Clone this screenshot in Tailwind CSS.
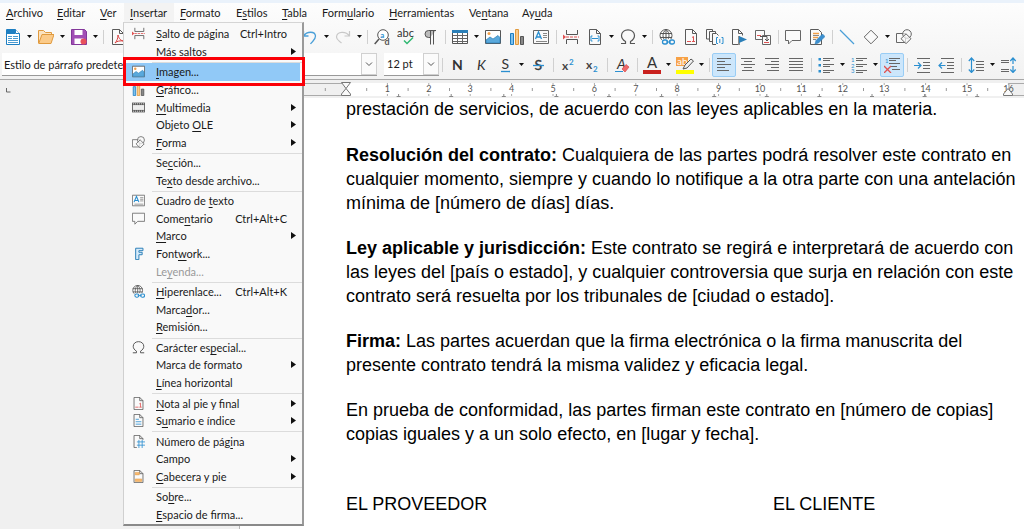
<!DOCTYPE html>
<html lang="es">
<head>
<meta charset="utf-8">
<meta name="viewport" content="width=device-width, initial-scale=1">
<title>Contrato - Writer</title>
<script src="https://cdn.jsdelivr.net/npm/@tailwindcss/browser@4"></script>
</head>
<body class="h-screen overflow-hidden bg-white font-[Lato,sans-serif] text-[11px] text-[#1a1a1a]">

<svg class="hidden" aria-hidden="true">
  <defs>
    <g id="page"><path d="M2.5.5h7l4 4v11h-11z" fill="#fafafa" stroke="#5a5a5a"/><path d="M9.5.5v4h4" fill="none" stroke="#5a5a5a"/></g>
  </defs>
  <symbol id="new" viewBox="0 0 16 16"><path d="M1.500.5h9l4 4v11h-13z" fill="#fff" stroke="#1e7fc2"/><path d="M1 1h9v4H1z" fill="#1e7fc2"/><path d="M10.500.5v4h4" fill="#fff" stroke="#1e7fc2"/><path d="M3 7.500h4M3 9.500h4M3 11.500h10M3 13.500h10M8 7.500h5M8 9.500h5" stroke="#4a9bd1"/></symbol>
  <symbol id="open" viewBox="0 0 16 16"><path d="M.5 14V1.500h5l2 2h6v2" fill="#fbe3c0" stroke="#e09a3e"/><path d="M.7 14.500l3.300-9h12l-3 9z" fill="#fbcb8a" stroke="#e09a3e"/></symbol>
  <symbol id="save" viewBox="0 0 16 16"><path d="M.5.5h13l2 2v13H.5z" fill="#a14fb5" stroke="#83379a"/><path d="M3.500 1h8v5h-8zM3.500 9.500h9V15h-9z" fill="#fff"/><circle cx="12.500" cy="12.500" r="3" fill="#e8505b"/></symbol>
  <symbol id="pdf" viewBox="0 0 16 16"><use href="#page"/><path d="M5 14c2-2 3-5 3-8 1 4 3 6 6 6-4-.5-7 0-9 2z" fill="none" stroke="#d8403f"/></symbol>
  <symbol id="undo" viewBox="0 0 16 16"><path d="M1.500 2v5h5M1.500 7C5 2 13 2 13.500 7c0 4-3 5-5 8" fill="none" stroke="#4a9fd8" stroke-width="1.300"/></symbol>
  <symbol id="redo" viewBox="0 0 16 16"><path d="M14.500 2v5h-5M14.500 7C11 2 2 2 1.500 8c0 3 3 4 5 6" fill="none" stroke="#c8c8c8" stroke-width="1.200"/></symbol>
  <symbol id="find" viewBox="0 0 16 16"><circle cx="9" cy="6" r="5.300" fill="#fff" stroke="#555"/><path d="M5 10L.7 15" stroke="#555" stroke-width="1.500"/><text x="6.200" y="8.500" font-size="8" font-weight="bold" fill="#2b8fd0">a</text><text x="10.500" y="15.500" font-size="9" font-weight="bold" fill="#555">d</text></symbol>
  <symbol id="abc" viewBox="0 0 18 16"><text x="0" y="8" font-size="11" fill="#333">abc</text><path d="M7 11.500l3 3 6-6" fill="none" stroke="#2fb872" stroke-width="1.500"/></symbol>
  <symbol id="pilcrow" viewBox="0 0 16 16"><path d="M14 1.500H6.500a3.500 3.500 0 0 0 0 7H8z" fill="#bbb"/><path d="M14 1.500H6.500a3.500 3.500 0 0 0 0 7H8.500M8.500 2v13.500M11.500 2v13.500" fill="none" stroke="#555"/></symbol>
  <symbol id="table" viewBox="0 0 16 16"><path d="M.5 1.500h15v13H.5z" fill="#fff" stroke="#555"/><path d="M0 1h16v3H0z" fill="#2b7fb8"/><path d="M1 6.500h14M1 9.500h14M1 12.500h14M5.500 4v10M10.500 4v10" stroke="#666"/></symbol>
  <symbol id="image" viewBox="0 0 16 16"><path d="M.5 1.500h15v13H.5z" fill="#fff" stroke="#555"/><path d="M1 14v-3l4-3 3 2 5-3.500 2 2V14z" fill="#5aa9dc" stroke="#2b7fb8" stroke-width=".7"/><circle cx="4" cy="4.500" r="1.500" fill="#f2a04a"/></symbol>
  <symbol id="chart" viewBox="0 0 16 16"><path d="M1.500 4.500h3v11h-3z" fill="#7cc0ee" stroke="#1e7fc2"/><path d="M6.500.5h3v15h-3z" fill="#fbcb8a" stroke="#e09a3e"/><path d="M11.500 7.500h3v8h-3z" fill="#888" stroke="#555"/></symbol>
  <symbol id="textbox" viewBox="0 0 16 16"><path d="M.5 1.500h15v13H.5z" fill="#fafafa" stroke="#666"/><path d="M2.500 10L5.500 3l3 7M3.500 8h4" fill="none" stroke="#2b8fd0" stroke-width="1.300"/><path d="M10 4.500h4M10 6.500h4M10 8.500h4M3 12.500h11" stroke="#888"/></symbol>
  <symbol id="break" viewBox="0 0 16 16"><path d="M3.500 1v4.500h11V1M3.500 15v-4.500h11V15" fill="none" stroke="#555"/><path d="M3 8h13" stroke="#e05252" stroke-dasharray="3 1"/><path d="M0 5.500L3 8l-3 2.500z" fill="#e05252"/></symbol>
  <symbol id="field" viewBox="0 0 16 16"><use href="#page"/><path d="M5.500 7H4v5h1.500M10.500 7H12v5h-1.500M5 9.500h6" fill="none" stroke="#2b8fd0"/></symbol>
  <symbol id="omega" viewBox="0 0 16 16"><path d="M1 14.500h4.500v-2C3 11 1.500 9 1.500 6.500 1.500 3 4.500.800 8 .8s6.500 2.200 6.500 5.700c0 2.500-1.500 4.500-4 6v2H15" fill="none" stroke="#555" stroke-width="1.200"/></symbol>
  <symbol id="link" viewBox="0 0 16 16"><circle cx="7" cy="6.500" r="6" fill="#fff" stroke="#555"/><path d="M1 4.500h12M1 8.500h12M7 .5v12M7 .5c-4 3-4 9 0 12M7 .5c4 3 4 9 0 12" fill="none" stroke="#555"/><path d="M3 10h13v6H3z" fill="#f7f7f7"/><rect x="3.500" y="11" width="5" height="4" rx="2" fill="none" stroke="#2b8fd0" stroke-width="1.300"/><rect x="10.500" y="11" width="5" height="4" rx="2" fill="none" stroke="#2b8fd0" stroke-width="1.300"/><path d="M7 13h5" stroke="#2b8fd0"/></symbol>
  <symbol id="footnote" viewBox="0 0 16 16"><use href="#page"/><path d="M4 12.500h4" stroke="#e05252"/><path d="M9 8.500l1.500-1v5M9 12.500h3" fill="none" stroke="#e05252"/></symbol>
  <symbol id="pages" viewBox="0 0 18 16"><path d="M4.500 10h-4V.5h6V2" fill="#fafafa" stroke="#5a5a5a"/><path d="M8 12.500H3.500v-10h6V4" fill="#fafafa" stroke="#5a5a5a"/><path d="M10 15.500H6.500V4.500h4l2 2" fill="#fafafa" stroke="#5a5a5a"/><path d="M12 8.500h-1.500v6H12M15.500 8.500H17v6h-1.500M13.800 10v4" fill="none" stroke="#2b8fd0"/></symbol>
  <symbol id="bookmark" viewBox="0 0 16 16"><path d="M7 15.500H1.500V.5h6l4 4v2M7.500.5v4h4" fill="#fafafa" stroke="#5a5a5a"/><path d="M8 7v9" stroke="#222"/><path d="M8 7l8 3.500-8 3.500z" fill="#2b7fb8"/></symbol>
  <symbol id="cross" viewBox="0 0 16 16"><path d="M.5 1.500h9v9h-9z" fill="#fafafa" stroke="#666"/><path d="M7.500 6.500h8v9h-8z" fill="#fafafa" stroke="#666"/><path d="M2 6.500h4" stroke="#e05252"/><path d="M9 13.500h5" stroke="#e05252"/><path d="M5 7.500h7v4M10 10l2 2 2-2" fill="none" stroke="#555"/></symbol>
  <symbol id="comment" viewBox="0 0 16 16"><path d="M.5 1.500h15v10H7l-3.500 3.500v-3.500h-3z" fill="#fafafa" stroke="#666"/></symbol>
  <symbol id="track" viewBox="0 0 16 16"><path d="M1.500.5h8l3 3v12h-11z" fill="#fafafa" stroke="#5a5a5a"/><path d="M4 4.500h6M4 8.500h5" stroke="#f2a04a" stroke-width="1.500"/><path d="M4 6.500h6M4 10.500h3" stroke="#888"/><path d="M6 15l1-3.500L13.500 5 16 7.500 9.500 14z" fill="#3c8fd0" stroke="#2b7fb8" stroke-width=".6"/></symbol>
  <symbol id="line" viewBox="0 0 16 16"><path d="M1 1l14 14" stroke="#4a9fd8" stroke-width="1.200"/></symbol>
  <symbol id="diamond" viewBox="0 0 16 16"><path d="M8 1.200L14.800 8 8 14.800 1.200 8z" fill="#fafafa" stroke="#666"/></symbol>
  <symbol id="shapes" viewBox="0 0 16 16"><path d="M.5 4.500h9v9h-9z" fill="#fafafa" stroke="#666"/><circle cx="11" cy="5" r="4.300" fill="#fafafa" fill-opacity=".7" stroke="#666"/><path d="M10 4.800L15 9.700l-5 5-5-5z" fill="#fafafa" fill-opacity=".7" stroke="#666"/></symbol>
  <symbol id="bold" viewBox="0 0 16 16"><text x="3" y="13" font-size="14" font-weight="bold" fill="#333">N</text></symbol>
  <symbol id="italic" viewBox="0 0 16 16"><text x="4" y="13" font-size="14" font-style="italic" fill="#333">K</text></symbol>
  <symbol id="under" viewBox="0 0 16 16"><text x="4.500" y="12" font-size="14" fill="#333">S</text><path d="M4 14.500h9" stroke="#2b8fd0" stroke-width="1.300"/></symbol>
  <symbol id="strike" viewBox="0 0 16 16"><text x="4.500" y="13" font-size="14" fill="#333" stroke="#444" stroke-width=".4">S</text><path d="M3 8.500h11" stroke="#2b8fd0" stroke-width="1.300"/></symbol>
  <symbol id="sup" viewBox="0 0 16 16"><text x="2" y="12.500" font-size="12" font-weight="bold" fill="#444">x</text><text x="9" y="7.500" font-size="8" font-weight="bold" fill="#2b8fd0">2</text></symbol>
  <symbol id="sub" viewBox="0 0 16 16"><text x="2" y="11.500" font-size="12" font-weight="bold" fill="#444">x</text><text x="9" y="15" font-size="8" font-weight="bold" fill="#2b8fd0">2</text></symbol>
  <symbol id="clear" viewBox="0 0 16 16"><text x="3" y="12" font-size="14" font-style="italic" fill="#333">A</text><path d="M1 14.500h8" stroke="#2b8fd0"/><path d="M8 12l4-4.500 3 2.500-4 5z" fill="#ee6a6a" stroke="#d84848" stroke-width=".7"/></symbol>
  <symbol id="fcolor" viewBox="0 0 18 18"><text x="4" y="12" font-size="15" fill="#333">A</text><path d="M0 14h18v4H0z" fill="#c9211e"/></symbol>
  <symbol id="hilite" viewBox="0 0 18 18"><path d="M0 1h12v9H0z" fill="#f7a145"/><text x="1" y="9" font-size="10" fill="#fff">ab</text><path d="M7 13l2-4 6-6 2.500 2-6.500 7z" fill="#eee" stroke="#555"/><path d="M0 14h18v4H0z" fill="#ff0"/></symbol>
  <symbol id="left" viewBox="0 0 16 16"><path d="M1 1.500h14M1 4.500h8M1 7.500h14M1 10.500h8M1 13.500h12" stroke="#666"/></symbol>
  <symbol id="center" viewBox="0 0 16 16"><path d="M1 1.500h14M4 4.500h8M1 7.500h14M4 10.500h8M2 13.500h12" stroke="#666"/></symbol>
  <symbol id="right" viewBox="0 0 16 16"><path d="M1 1.500h14M7 4.500h8M1 7.500h14M7 10.500h8M3 13.500h12" stroke="#666"/></symbol>
  <symbol id="just" viewBox="0 0 16 16"><path d="M1 1.500h14M1 4.500h14M1 7.500h14M1 10.500h14M1 13.500h14" stroke="#666"/></symbol>
  <symbol id="bullets" viewBox="0 0 16 16"><path d="M5 1.500h11M5 3.500h7M5 7.500h11M5 9.500h7M5 13.500h11M5 15.500h7" stroke="#666"/><path d="M.5 1h2.500v2.500H.5zM.5 7h2.500v2.500H.5zM.5 13h2.500v2.500H.5z" fill="#2b8fd0"/></symbol>
  <symbol id="numbers" viewBox="0 0 16 16"><path d="M5 1.500h11M5 3.500h7M5 7.500h11M5 9.500h7M5 13.500h11M5 15.500h7" stroke="#666"/><g font-size="6" fill="#2b8fd0"><text x="0" y="5">1</text><text x="0" y="10.500">2</text><text x="0" y="16">3</text></g></symbol>
  <symbol id="nolist" viewBox="0 0 16 16"><path d="M5 1.500h11M5 3.500h7M5 6.500h11M7 9.500h6M8 12.500h8" stroke="#666"/><text x="1" y="5.500" font-size="6" fill="#2b8fd0">1</text><path d="M0 9l7 7M7 9l-7 7" stroke="#e05252" stroke-width="1.300"/></symbol>
  <symbol id="indent" viewBox="0 0 16 16"><path d="M3 1.500h13M9 5.500h7M9 8.500h7M9 11.500h7M3 15.500h13" stroke="#666"/><path d="M0 8.500h7M4 5.500l3 3-3 3" fill="none" stroke="#2b8fd0" stroke-width="1.200"/></symbol>
  <symbol id="outdent" viewBox="0 0 16 16"><path d="M3 1.500h13M9 5.500h7M9 8.500h7M9 11.500h7M3 15.500h13" stroke="#666"/><path d="M7.500 8.500H.8M4 5.500l-3 3 3 3" fill="none" stroke="#2b8fd0" stroke-width="1.200"/></symbol>
  <symbol id="spacing" viewBox="0 0 16 16"><path d="M8 4.500h8M8 7.500h8M8 10.500h8M8 13.500h8" stroke="#666"/><path d="M3.500 1v14M.8 4l2.700-3 2.700 3M.8 12.500l2.700 3 2.700-3" fill="none" stroke="#2b8fd0" stroke-width="1.200"/></symbol>
  <symbol id="paraspace" viewBox="0 0 16 16"><path d="M0 3.500h8M0 5.500h8M0 12.500h8M0 14.500h8" stroke="#666"/><path d="M12 1v6M9.300 4L12 1l2.700 3M12 9v6M9.300 12.500l2.700 3 2.700-3" fill="none" stroke="#2b8fd0" stroke-width="1.200"/></symbol>
  <symbol id="film" viewBox="0 0 16 16"><path d="M0 2h16v12H0z" fill="#555"/><path d="M1 5h14v6H1z" fill="#eee"/><path d="M1 3.500h14M1 12.500h14" stroke="#fff" stroke-dasharray="1.500 1"/></symbol>
  <symbol id="fontwork" viewBox="0 0 16 16"><path d="M4.500 1.500h9v3h-5v2h4v3h-4v6h-4z" fill="#d6ebfa" stroke="#2b7fb8" stroke-width="1.200"/></symbol>
  <symbol id="index" viewBox="0 0 16 16"><use href="#page"/><path d="M4.500 6.500h4M4.500 9.500h7M4.500 12.500h7" stroke="#2b8fd0"/></symbol>
  <symbol id="pagenum" viewBox="0 0 16 16"><use href="#page"/><path d="M6 6h10v10H6z" fill="#f8f8f8"/><path d="M8.500 6v10M12.500 6v10M6 8.500h10M6 12.500h10" stroke="#2b8fd0"/></symbol>
  <symbol id="header" viewBox="0 0 16 16"><use href="#page"/><path d="M4 3h5v3H4zM4 11h8v3H4z" fill="#f9b870" stroke="#e09a3e" stroke-width=".6"/></symbol>
</svg>

<div class="flex h-full flex-col">
  <header class="shrink-0 border-t-3 border-b border-t-[#eaf2fb] border-b-[#a8a8a8] bg-linear-to-b from-[#fdfdfd] to-[#f2f2f2]">
    <nav id="menubar" class="flex h-5 items-center" aria-label="Menú principal"></nav>
    <div id="standard" class="flex h-[27px] items-center pl-px" role="toolbar" aria-label="Estándar"></div>
    <div class="flex h-[29px] items-center">
      <input aria-label="Estilo de párrafo" value="Estilo de párrafo predeterminado" class="ml-0.5 h-[23px] w-[170px] shrink-0 border-b border-[#999] bg-white px-0.5 outline-none">
      <div class="ml-2 flex h-[23px] w-[197px] shrink-0 border-b border-[#999] bg-white">
        <input aria-label="Nombre de tipo de letra" value="Arial" class="min-w-0 flex-1 px-1 outline-none">
        <button aria-label="Elegir tipo de letra" class="flex w-4 items-center justify-center border border-[#d0d0d0] bg-[#fbfbfb]"><svg class="w-2" viewBox="0 0 8 8"><path d="M1 2.500l3 3 3-3" fill="none" stroke="#555"/></svg></button>
      </div>
      <div class="ml-[7px] flex h-[23px] w-[55px] shrink-0 border-b border-[#999] bg-white">
        <input aria-label="Tamaño de letra" value="12 pt" class="min-w-0 flex-1 pl-[3px] outline-none">
        <button aria-label="Elegir tamaño" class="flex w-4 items-center justify-center border border-[#d0d0d0] bg-[#fbfbfb]"><svg class="w-2" viewBox="0 0 8 8"><path d="M1 2.500l3 3 3-3" fill="none" stroke="#555"/></svg></button>
      </div>
      <div id="formatting" class="flex items-center" role="toolbar" aria-label="Formato"></div>
    </div>
  </header>

  <div class="h-[18px] shrink-0 bg-[#f0f0f0]">
    <svg id="ruler" class="block h-[18px] w-full" role="img" aria-label="Regla horizontal"></svg>
  </div>

  <main class="flex min-h-0 flex-1 bg-[#f0f0f0]">
    <article class="ml-[239px] flex-1 overflow-hidden border-l border-[#b5b5b5] bg-white pl-[106px] font-['Liberation_Sans',sans-serif] text-[18px] leading-6 whitespace-nowrap text-black">
      <p class="mb-[22px] -mt-px">prestación de servicios, de acuerdo con las leyes aplicables en la materia.</p>
      <p class="mb-[21px]"><b>Resolución del contrato:</b> Cualquiera de las partes podrá resolver este contrato en<br>cualquier momento, siempre y cuando lo notifique a la otra parte con una antelación<br>mínima de [número de días] días.</p>
      <p class="mb-[21px]"><b>Ley aplicable y jurisdicción:</b> Este contrato se regirá e interpretará de acuerdo con<br>las leyes del [país o estado], y cualquier controversia que surja en relación con este<br>contrato será resuelta por los tribunales de [ciudad o estado].</p>
      <p class="mb-[21px]"><b>Firma:</b> Las partes acuerdan que la firma electrónica o la firma manuscrita del<br>presente contrato tendrá la misma validez y eficacia legal.</p>
      <p class="mb-[46px]">En prueba de conformidad, las partes firman este contrato en [número de copias]<br>copias iguales y a un solo efecto, en [lugar y fecha].</p>
      <div class="flex"><p class="w-[427px]">EL PROVEEDOR</p><p>EL CLIENTE</p></div>
    </article>
  </main>
</div>

<div id="menu" role="menu" aria-label="Insertar" class="absolute top-[22px] left-[123px] flex h-[504px] w-[181px] flex-col border-t border-r-2 border-b-2 border-l border-t-[#d5d5d5] border-r-[#9a9a9a] border-b-[#8a8a8a] border-l-[#d0d0d0] bg-[#f9f9f9] pt-0.5 pb-px"></div>
<div class="pointer-events-none absolute top-[57px] left-[123px] h-[29px] w-[182px] border-3 border-[#fb0007]"></div>

<script>
const icon = (id, cls) => `<svg class="${cls}" aria-hidden="true"><use href="#${id}"/></svg>`;
// An underscore marks the letter after it as the access key.
const label = t => t.replace(/_(.)/, '<span class="underline underline-offset-2">$1</span>');

document.getElementById('menubar').innerHTML = [
  ['_Archivo', 'w-[51px]'], ['_Editar', 'w-[43px]'], ['_Ver', 'w-[30px]'], ['_Insertar', 'w-[50px] bg-[#f3f3f3]'],
  ['_Formato', 'w-[56px]'], ['E_stilos', 'w-[46px]'], ['_Tabla', 'w-[40px]'], ['Form_ulario', 'w-[67px]'],
  ['_Herramientas', 'w-[80px]'], ['Ve_ntana', 'w-[53px]'], ['Ay_uda', 'w-[46px]'],
].map(([t, w]) => `<button class="h-full pl-1.5 text-left whitespace-nowrap ${w}">${label(t)}</button>`).join('');

// "|" is a separator, "v" a drop-down arrow, "..." the run of buttons beneath the open menu, "*" a pressed button.
const bar = spec => spec.split(' ').map(k => {
  if (k === '|') return '<span class="flex w-1.5 shrink-0 justify-center"><span class="h-3.5 w-px bg-[#d0d0d0]"></span></span>';
  if (k === 'v') return '<button aria-label="Más opciones" class="flex h-6 w-[9px] shrink-0 items-center justify-center"><svg class="size-[5px]" viewBox="0 0 5 5"><path d="M0 1h5L2.500 4z" fill="#111"/></svg></button>';
  if (k === '...') return '<span class="w-[168px] shrink-0"></span>';
  const on = k[0] === '*', id = k.replace('*', '');
  const big = id === 'fcolor' || id === 'hilite' || id === 'abc' || id === 'pages';
  return `<button aria-label="${id}" class="flex h-6 w-6 shrink-0 items-center justify-center rounded-xs ${on ? 'border border-[#99cdf5] bg-[#cce6fb]' : ''}">${icon(id, big ? 'h-[18px] w-[18px] shrink-0' : 'size-4 shrink-0')}</button>`;
}).join('');
document.getElementById('standard').innerHTML = bar('new v open v save v | pdf ... undo v redo v | find abc pilcrow | table v image chart textbox | break field v omega v | link footnote pages bookmark cross | comment track | line diamond v shapes');
document.getElementById('formatting').innerHTML = bar('| bold italic under v strike | sup sub | clear | fcolor v hilite v | *left center right just | bullets v numbers v *nolist | indent outdent | spacing v paraspace');

// Ruler: one unit is 41.4px, default tab stops every 52.6px.
let r = '<rect x="124.500" y="3.500" width="222" height="12" fill="#f0f0f0" stroke="#aaa"/><rect x="346" y="3" width="662" height="13" fill="#fff"/><path d="M1024 3.500h-15v12h15" fill="none" stroke="#aaa"/><path d="M6.500 8v4h4" fill="none" stroke="#666"/>';
for (let i = -1; i <= 16; i++) {
  const x = 346 + i * 41.4;
  if (i > 0) r += `<path d="M${x} 3v2M${x} 14v2" stroke="#aaa"/><text x="${x}" y="12" text-anchor="middle" font-size="9" fill="#555">${i}</text>`;
  if (i < 16) r += `<path d="M${x + 20.7} 8v3" stroke="#999"/>`;
}
for (let t = 1; t <= 12; t++) { const x = 346 + t * 52.6; r += `<path d="M${x - 2} 16.500h4M${x} 14v3" stroke="#888"/>`; }
r += '<path d="M341.500 2.500h9l-4.500 6zM341.500 15.500h9v-1.500l-4.500-5.500-4.500 5.500z" fill="#fafafa" stroke="#777"/><path d="M1003.500 15.500h9v-1.500l-4.500-5.500-4.500 5.500z" fill="#fafafa" stroke="#777"/>';
document.getElementById('ruler').innerHTML = r;

// Menu rows: label, icon, shortcut (">" opens a submenu).
document.getElementById('menu').innerHTML = [
  ['_Salto de página', 'break', 'Ctrl+Intro'], ['Más s_altos', '', '>'], 0,
  ['_Imagen...', 'image'], ['_Gráfico...', 'chart'], ['_Multimedia', 'film', '>'], ['Objeto _OLE', '', '>'], ['_Forma', 'shapes', '>'], 0,
  ['Se_cción...'], ['Te_xto desde archivo...'], 0,
  ['Cuadro de _texto', 'textbox'], ['Come_ntario', 'comment', 'Ctrl+Alt+C'], ['_Marco', '', '>'], ['Font_work...', 'fontwork'], ['Le_yenda...', '', 'off'], 0,
  ['_Hiperenlace...', 'link', 'Ctrl+Alt+K'], ['Marca_dor...'], ['_Remisión...'], 0,
  ['Carácter es_pecial...', 'omega'], ['Marca de formato', '', '>'], ['_Línea horizontal'], 0,
  ['_Nota al pie y final', 'footnote', '>'], ['S_umario e índice', 'index', '>'], 0,
  ['Número de pág_ina', 'pagenum'], ['Campo', '', '>'], ['_Cabecera y pie', 'header', '>'], 0,
  ['So_bre...'], ['_Espacio de firma...'],
].map(m => {
  if (!m) return '<div role="separator" class="ml-7 h-[3px] shrink-0 border-b border-[#dcdcdc]"></div>';
  const [t, ic, key] = m, sel = t === '_Imagen...';
  return `<button role="menuitem" class="mx-0.5 flex min-h-0 flex-1 items-center text-left leading-none whitespace-nowrap ${sel ? 'bg-[#91c9f7]' : ''} ${key === 'off' ? 'text-[#9a9a9a]' : ''}" ${key === 'off' ? 'disabled' : ''}>
    <span class="flex w-[30px] shrink-0 pl-1.5">${ic ? icon(ic, 'size-[13px]') : ''}</span><span class="flex-1">${label(t)}</span>
    ${key === '>' ? '<svg class="mr-1 h-[7px] w-[5px]" viewBox="0 0 5 7"><path d="M0 0l5 3.500L0 7z" fill="#111"/></svg>' : key && key !== 'off' ? `<span class="mr-[13px]">${key}</span>` : ''}
  </button>`;
}).join('');
</script>
</body>
</html>
